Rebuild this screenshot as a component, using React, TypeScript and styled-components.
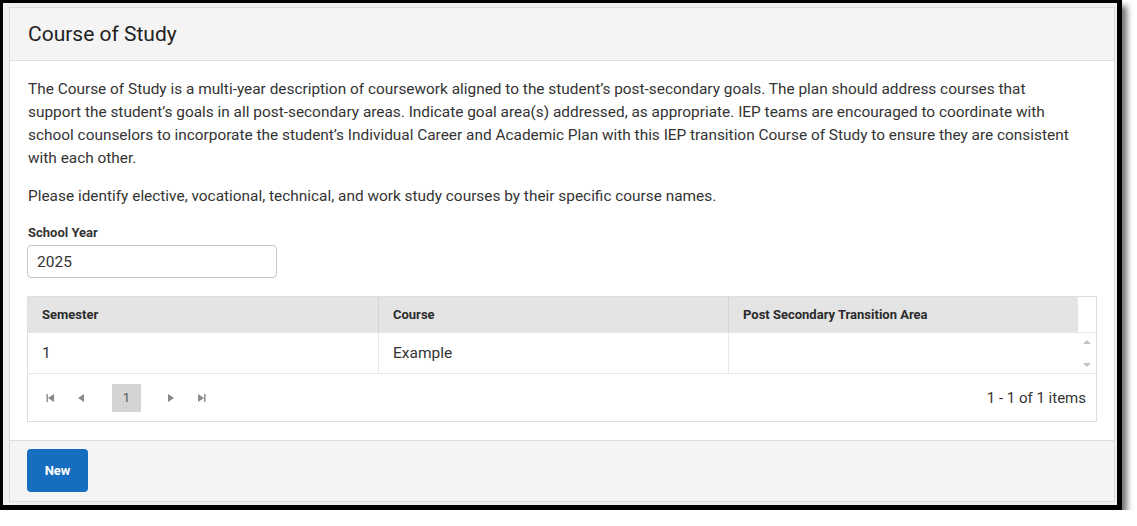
import React from 'react';
import styled, { createGlobalStyle } from 'styled-components';

const GlobalStyle = createGlobalStyle`
    html, body {
        margin: 0;
        padding: 0;
        background: #ffffff;
    }
    body {
        font-family: Roboto, "Liberation Sans", Arial, sans-serif;
        color: #333333;
    }
    * {
        box-sizing: border-box;
    }
`;

const Frame = styled.div`
    width: 1122px;
    height: 510px;
    border: 3px solid #000;
    border-right-width: 5px;
    border-bottom-width: 5px;
    background: #efefef;
    padding: 4px 3px 3px 6px;
    box-shadow: 5px 6px 6px rgba(0, 0, 0, 0.55);
    display: flex;
`;

const Card = styled.div`
    flex: 1;
    display: flex;
    flex-direction: column;
    background: #fff;
    border: 1px solid #dcdcdc;
`;

const Header = styled.div`
    height: 53px;
    display: flex;
    align-items: center;
    padding: 0 18px;
    background: #f4f4f4;
    border-bottom: 1px solid #dedede;
`;

const Title = styled.h1`
    margin: 0;
    font-size: 21px;
    font-weight: 400;
    color: #222;
`;

const Body = styled.div`
    flex: 1;
    padding: 17px 17px 0 17px;
`;

const Para = styled.p`
    margin: 0 22px 15px 1px;
    font-size: 15.4px;
    line-height: 23px;
    color: #333;
`;

const Label = styled.label`
    display: block;
    margin: 17px 0 4px 1px;
    font-size: 13px;
    line-height: 16px;
    font-weight: 700;
    color: #333;
`;

const Input = styled.input`
    display: block;
    width: 250px;
    height: 33px;
    padding: 0 9px;
    border: 1px solid #c6c6c6;
    border-radius: 4px;
    font-family: inherit;
    font-size: 15.5px;
    color: #333;
    outline: none;
`;

const Grid = styled.div`
    margin-top: 18px;
    border: 1px solid #dddddd;
`;

const GridRow = styled.div<{ $head?: boolean }>`
    display: grid;
    grid-template-columns: 351px 350px 349px 18px;
    height: ${({ $head }) => ($head ? '36px' : '41px')};
    background: ${({ $head }) => ($head ? '#e4e4e4' : '#fff')};
    border-bottom: 1px solid #e6e6e6;
`;

const Cell = styled.div<{ $head?: boolean }>`
    display: flex;
    align-items: center;
    padding: 0 14px;
    border-right: 1px solid ${({ $head }) => ($head ? '#d2d2d2' : '#e6e6e6')};
    font-size: ${({ $head }) => ($head ? '13px' : '15.5px')};
    font-weight: ${({ $head }) => ($head ? 700 : 400)};
    color: ${({ $head }) => ($head ? '#2b2b2b' : '#333')};

    &:nth-child(3) {
        border-right: none;
    }
`;

const Gutter = styled.div<{ $head?: boolean }>`
    background: #fff;
    display: flex;
    flex-direction: column;
    justify-content: space-between;
    align-items: center;
    padding: ${({ $head }) => ($head ? '0' : '7px 0 6px')};
`;

const Arrow = styled.span<{ $down?: boolean }>`
    width: 0;
    height: 0;
    border-left: 4px solid transparent;
    border-right: 4px solid transparent;
    ${({ $down }) =>
        $down ? 'border-top: 4px solid #c4c4c4;' : 'border-bottom: 4px solid #c4c4c4;'}
`;

const Pager = styled.div`
    height: 47px;
    display: flex;
    align-items: center;
    padding: 0 10px 0 8px;
`;

const PagerButtons = styled.div`
    display: flex;
    align-items: center;
    flex: 1;
`;

const NavButton = styled.button`
    width: 30px;
    height: 28px;
    padding: 0;
    border: none;
    background: transparent;
    display: flex;
    align-items: center;
    justify-content: center;
    cursor: pointer;
`;

const PageNum = styled.span`
    width: 29px;
    height: 28px;
    margin: 0 15px 0 16px;
    display: flex;
    align-items: center;
    justify-content: center;
    background: #d4d4d4;
    font-size: 13px;
    color: #555;
`;

const PagerInfo = styled.span`
    font-size: 15px;
    color: #333;
`;

const Footer = styled.div`
    height: 61px;
    padding: 8px 17px;
    background: #f4f4f4;
    border-top: 1px solid #dedede;
`;

const NewButton = styled.button`
    width: 61px;
    height: 43px;
    border: none;
    border-radius: 4px;
    background: #176dbf;
    color: #fff;
    font-family: inherit;
    font-size: 13px;
    font-weight: 700;
    cursor: pointer;
`;

const Tri = ({ dir, bar }: { dir: 'left' | 'right'; bar?: boolean }) => (
    <svg width="12" height="12" viewBox="0 0 12 12">
        {dir === 'left' ? (
            <>
                <path d="M9 2 L3 6 L9 10 Z" fill="#8a8a8a" />
                {bar && <rect x="1.5" y="2" width="1.4" height="8" fill="#8a8a8a" />}
            </>
        ) : (
            <>
                <path d="M3 2 L9 6 L3 10 Z" fill="#8a8a8a" />
                {bar && <rect x="9.1" y="2" width="1.4" height="8" fill="#8a8a8a" />}
            </>
        )}
    </svg>
);

const App = () => {
    return (
        <>
            <GlobalStyle />
            <Frame>
                <Card>
                    <Header>
                        <Title>Course of Study</Title>
                    </Header>
                    <Body>
                        <Para>
                            The Course of Study is a multi-year description of coursework aligned to the
                            student’s post-secondary goals. The plan should address courses that support the
                            student’s goals in all post-secondary areas. Indicate goal area(s) addressed, as
                            appropriate. IEP teams are encouraged to coordinate with school counselors to
                            incorporate the student’s Individual Career and Academic Plan with this IEP
                            transition Course of Study to ensure they are consistent with each other.
                        </Para>
                        <Para>
                            Please identify elective, vocational, technical, and work study courses by their
                            specific course names.
                        </Para>
                        <Label htmlFor="school-year">School Year</Label>
                        <Input id="school-year" defaultValue="2025" />
                        <Grid>
                            <GridRow $head>
                                <Cell $head>Semester</Cell>
                                <Cell $head>Course</Cell>
                                <Cell $head>Post Secondary Transition Area</Cell>
                                <Gutter $head />
                            </GridRow>
                            <GridRow>
                                <Cell>1</Cell>
                                <Cell>Example</Cell>
                                <Cell />
                                <Gutter>
                                    <Arrow />
                                    <Arrow $down />
                                </Gutter>
                            </GridRow>
                            <Pager>
                                <PagerButtons>
                                    <NavButton aria-label="First page">
                                        <Tri dir="left" bar />
                                    </NavButton>
                                    <NavButton aria-label="Previous page">
                                        <Tri dir="left" />
                                    </NavButton>
                                    <PageNum>1</PageNum>
                                    <NavButton aria-label="Next page">
                                        <Tri dir="right" />
                                    </NavButton>
                                    <NavButton aria-label="Last page">
                                        <Tri dir="right" bar />
                                    </NavButton>
                                </PagerButtons>
                                <PagerInfo>1 - 1 of 1 items</PagerInfo>
                            </Pager>
                        </Grid>
                    </Body>
                    <Footer>
                        <NewButton>New</NewButton>
                    </Footer>
                </Card>
            </Frame>
        </>
    );
};

export default App;
